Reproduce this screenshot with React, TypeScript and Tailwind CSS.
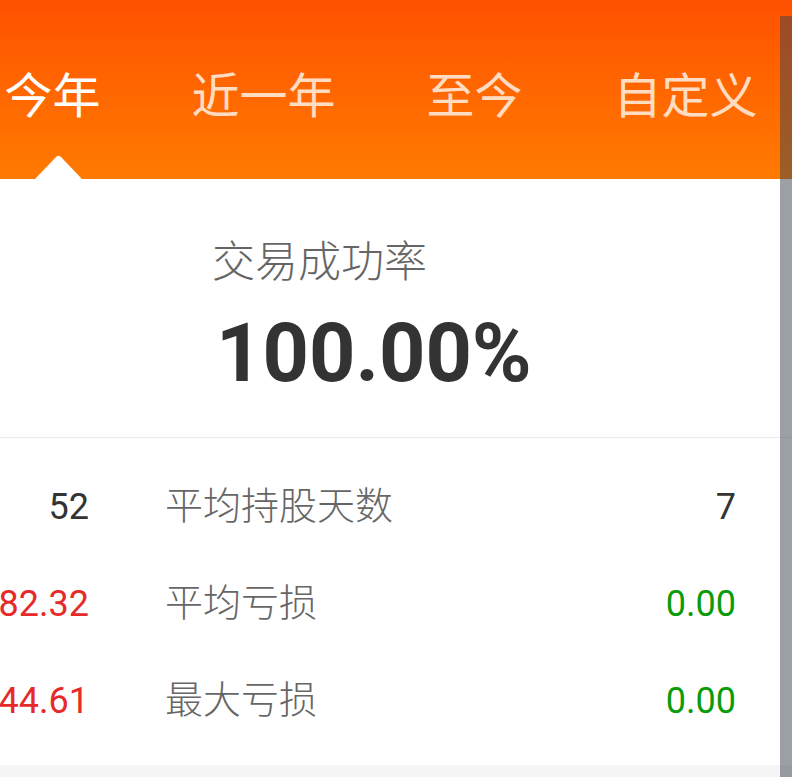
const tabs = [
  { label: '今年', active: true },
  { label: '近一年', active: false },
  { label: '至今', active: false },
  { label: '自定义', active: false },
];

const rows = [
  { left: '52', leftColor: 'text-[#333333]', label: '平均持股天数', right: '7', rightColor: 'text-[#333333]' },
  { left: '82.32', leftColor: 'text-[#e62a2a]', label: '平均亏损', right: '0.00', rightColor: 'text-[#0a9b0a]' },
  { left: '44.61', leftColor: 'text-[#e62a2a]', label: '最大亏损', right: '0.00', rightColor: 'text-[#0a9b0a]' },
];

export default function App() {
  return (
    <div
      className="relative h-[777px] w-[792px] overflow-hidden bg-white"
      style={{ fontFamily: 'Roboto, "Noto Sans CJK SC", sans-serif' }}
    >
      {/* period tabs */}
      <div className="relative h-[179px] bg-gradient-to-b from-[#ff5000] to-[#ff7a00]">
        <div className="ml-[-53px] flex pt-[68px]">
          {tabs.map((t) => (
            <div
              key={t.label}
              className={`flex w-[211px] justify-center text-[48px] leading-[58px] ${
                t.active ? 'text-white' : 'text-[#ffdcc2]'
              }`}
            >
              {t.label}
            </div>
          ))}
        </div>
        <svg className="absolute bottom-0 left-[35px]" width="47" height="24" viewBox="0 0 47 24">
          <path d="M0 24 L21 2 Q23.5 -0.5 26 2 L47 24 Z" fill="#ffffff" />
        </svg>
      </div>

      {/* success rate */}
      <div className="h-[259px] border-b border-[#ebebeb] pl-[212px] pt-[57px]">
        <div className="text-[43px] font-light leading-[52px] text-[#666666]">交易成功率</div>
        <div className="ml-[4px] mt-[21px] text-[81px] font-bold leading-[90px] text-[#333333]">100.00%</div>
      </div>

      {/* stats */}
      <div className="pt-[20px] pb-[16px]">
        {rows.map((r) => (
          <div key={r.label} className="flex h-[97px] items-center">
            <div className={`flex w-[89px] justify-end overflow-hidden whitespace-nowrap text-[36px] ${r.leftColor}`}>
              {r.left}
            </div>
            <div className="ml-[76px] flex w-[571px] items-center justify-between">
              <span className="text-[38px] font-light text-[#666666]">{r.label}</span>
              <span className={`text-[36px] ${r.rightColor}`}>{r.right}</span>
            </div>
          </div>
        ))}
      </div>
      <div className="h-[40px] bg-[#f5f5f5]" />

      {/* scrollbar */}
      <div className="absolute bottom-0 right-0 top-[16px] w-[12px] bg-[rgba(57,65,75,0.5)]" />
    </div>
  );
}
